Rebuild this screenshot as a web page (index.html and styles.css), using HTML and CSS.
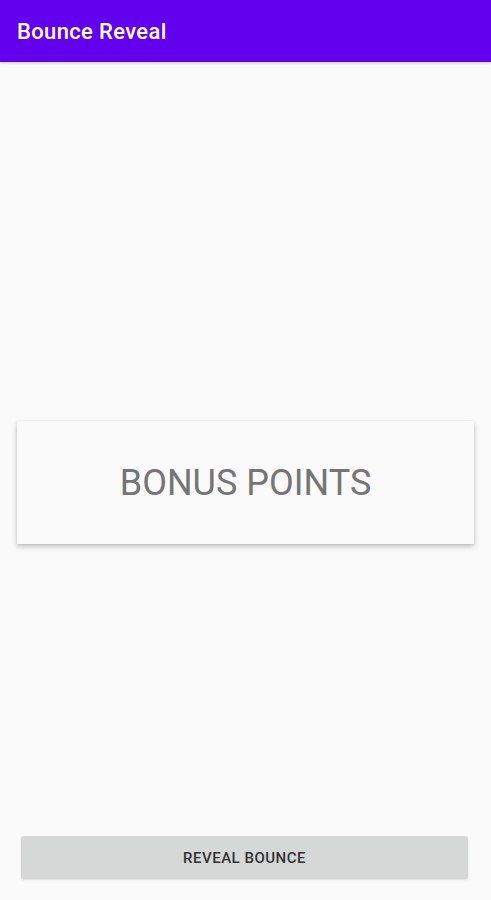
FILE: index.html
```html
<!DOCTYPE html>
<html>
<head>
<meta charset="utf-8">
<link rel="stylesheet" href="styles.css">
</head>
<body>
<div class="app">
  <header class="appbar"><span class="title">Bounce Reveal</span></header>
  <main class="content">
    <div class="card"><span class="card-text">BONUS POINTS</span></div>
  </main>
  <footer class="footer">
    <button class="btn">REVEAL BOUNCE</button>
  </footer>
</div>
</body>
</html>
```

FILE: styles.css
```css
html, body { margin: 0; padding: 0; }
body { background: #fafafa; font-family: Roboto, "Noto Sans", sans-serif; }
.app { display: flex; flex-direction: column; height: 900px; }
.appbar {
  height: 62px; background: #6200ee; display: flex; align-items: center;
  padding-left: 17px; box-shadow: 0 1px 3px rgba(0,0,0,0.2);
}
.title { color: #fff; font-size: 22px; font-weight: 500; letter-spacing: 0.35px; }
.content { flex: 1; display: flex; align-items: center; justify-content: center; padding-top: 66px; }
.card {
  width: 457px; height: 123px; background: #fafafa;
  box-shadow: 0 3px 6px rgba(0,0,0,0.18), 0 1px 3px rgba(0,0,0,0.12);
  display: flex; align-items: center; justify-content: center;
}
.card-text { font-size: 36px; color: #757575; padding-top: 2px; }
.footer { padding: 0 23px 21px 21px; }
.btn {
  width: 100%; height: 43px; border: none; border-radius: 3px; background: #d6d7d7;
  font-family: Roboto, sans-serif; font-weight: 500; font-size: 15px; color: #333;
  letter-spacing: 0.5px; box-shadow: 0 1px 2px rgba(0,0,0,0.12);
}
```
